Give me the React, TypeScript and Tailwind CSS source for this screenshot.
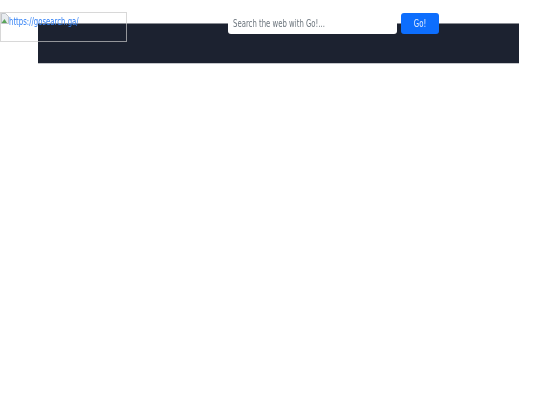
export default function App() {
  return (
    <div className="relative h-[405px] w-[540px] overflow-hidden bg-white font-['DejaVu_Sans',sans-serif]">
      <div className="ml-[38px] mt-[23px] flex h-[41px] w-[481px] items-start border-t border-b border-t-[#8a8d94] border-b-[#c4c6cb] bg-[#1c2230] pl-[190px]">
        <div className="-mt-[12px] flex items-start gap-[4px]">
          <div className="flex h-[22px] w-[169px] items-center rounded-b-[3px] bg-white pl-[5px] pt-px text-[10px] text-[#6c757d] [font-stretch:condensed]">
            <span className="origin-left scale-x-[0.77] whitespace-nowrap blur-[0.3px]">Search the web with Go!...</span>
          </div>
          <div className="mt-px flex h-[21px] w-[38px] items-center justify-center rounded-[3px] bg-[#0d6efd] text-[10px] text-[#e6efff] [font-stretch:condensed]">
            <span className="scale-x-[0.77] blur-[0.3px]">Go!</span>
          </div>
        </div>
      </div>
      <div className="absolute left-0 top-[12px] flex h-[30px] w-[127px] items-start border border-[#c8c8c8]/70">
        <svg width="8" height="11" viewBox="0 0 8 11" className="shrink-0">
          <path d="M0.5 0.5h4l3 3v7h-7z" fill="#e8ecf0" stroke="#b4b8bd" strokeWidth="0.8" />
          <path d="M0.5 10 3.5 6l2.5 4z" fill="#5aa55a" />
        </svg>
        <a className="mt-px origin-left scale-x-[0.77] whitespace-nowrap text-[10px] leading-[15px] text-[#2f7ff5] blur-[0.3px] [font-stretch:condensed]">
          https://gosearch.ga/
        </a>
      </div>
    </div>
  );
}
